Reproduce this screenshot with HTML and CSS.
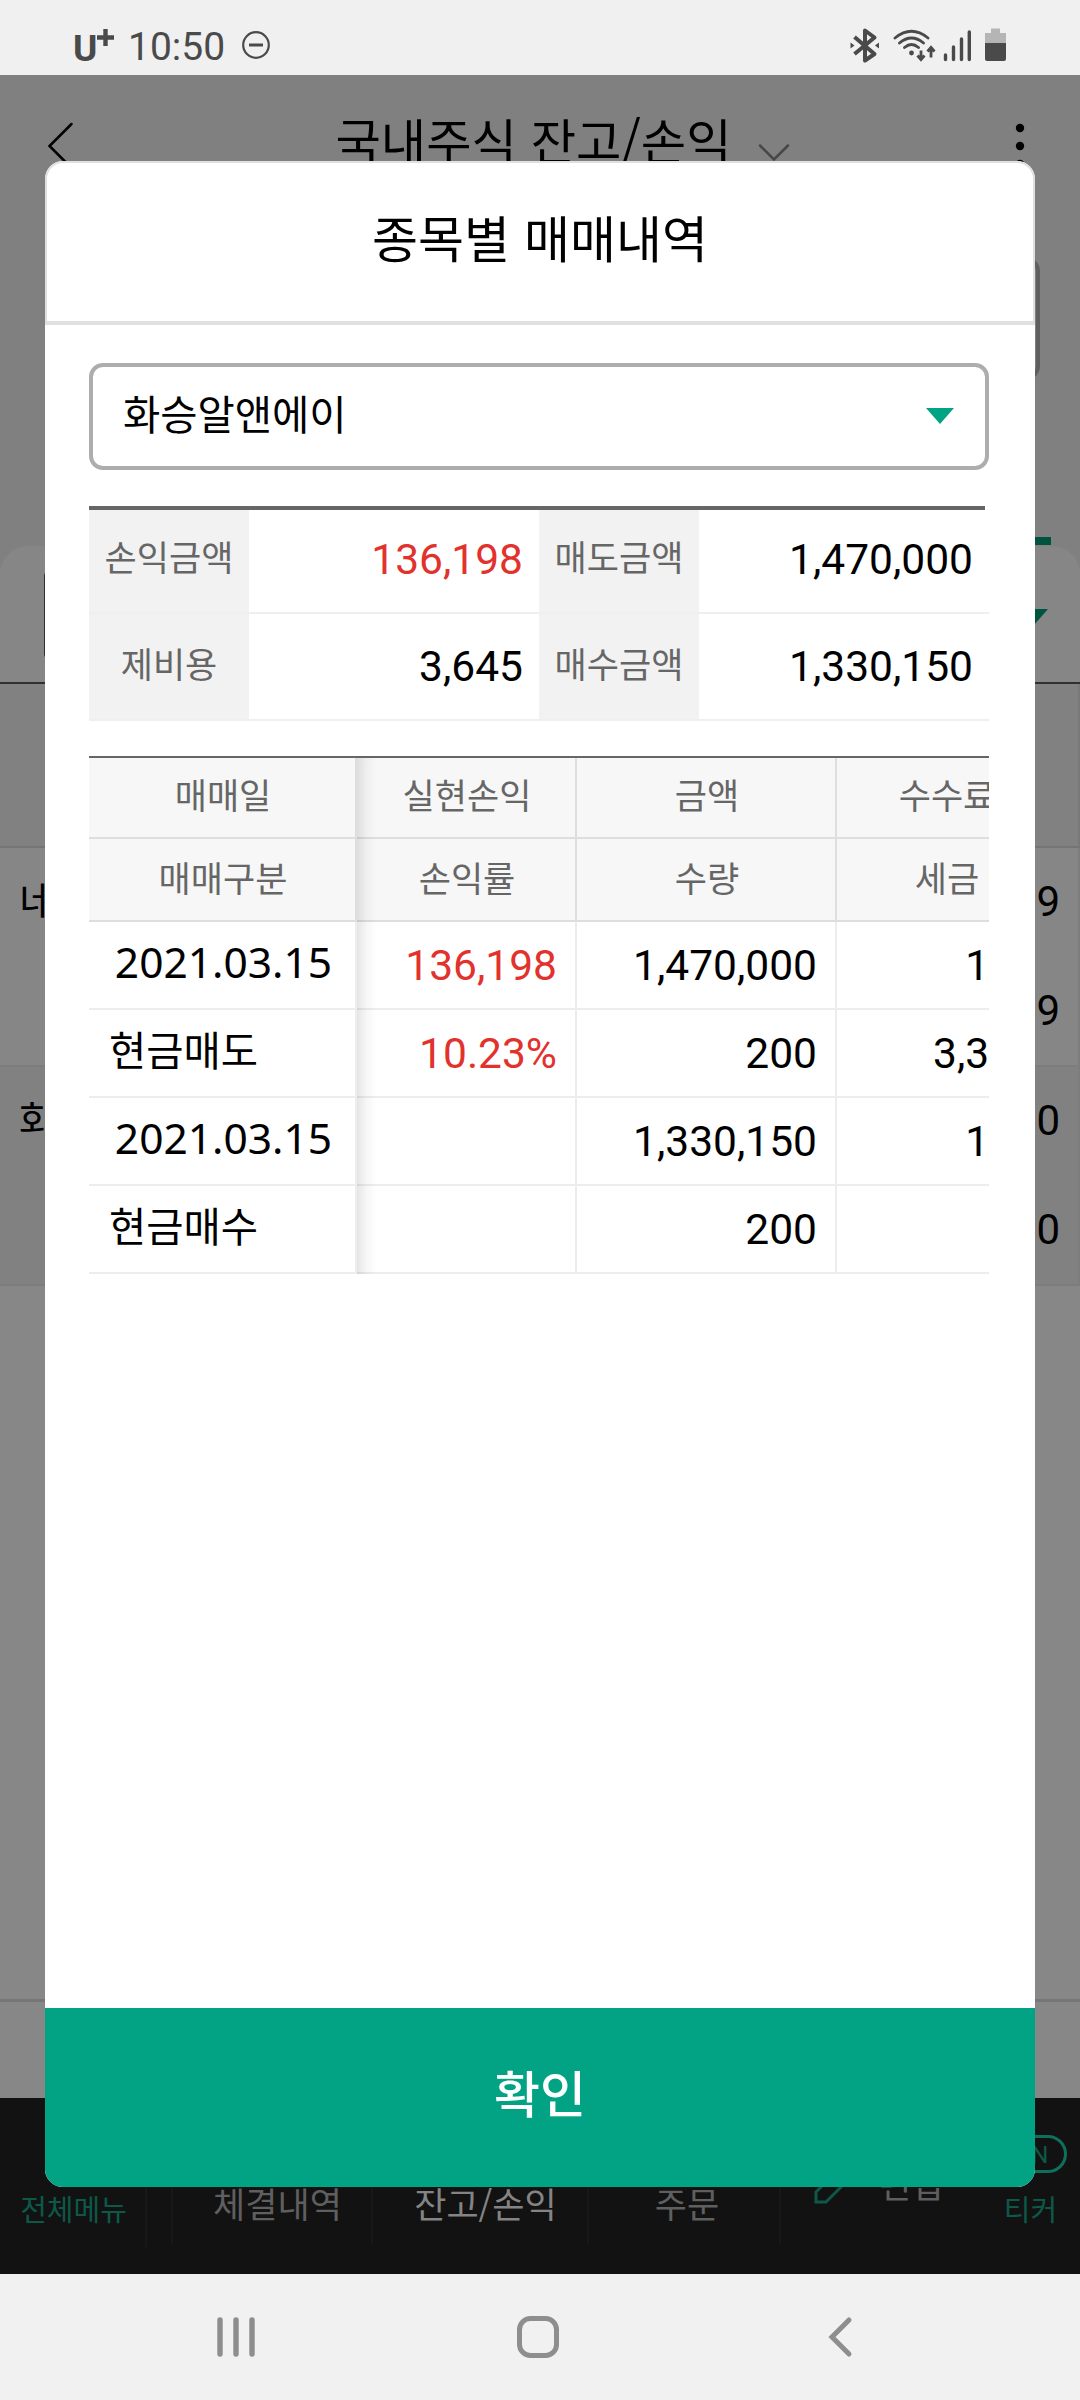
FILE: index.html
```html
<!DOCTYPE html>
<html lang="ko">
<head>
    <meta charset="UTF-8">
    <meta name="viewport" content="width=device-width, initial-scale=1.0">
    <title>종목별 매매내역</title>
    <link rel="stylesheet" href="styles.css">
</head>
<body>

    <!-- 상태바 -->
    <div class="status">
        <span class="carrier">U<svg width="17" height="17" viewBox="0 0 17 17"><path d="M8.500 0V17M0 8.500H17" stroke="#4a4a4a" stroke-width="4.400"/></svg></span>
        <span class="clock">10:50</span>
        <svg class="dnd" width="28" height="28" viewBox="0 0 28 28" fill="none" stroke="#4a4a4a">
            <circle cx="14" cy="14" r="12.800" stroke-width="2.200"/>
            <path d="M7 14H21" stroke-width="3"/>
        </svg>
        <svg class="status_icons" width="158" height="36" viewBox="0 0 158 36" fill="none" stroke="#4a4a4a">
            <!-- 블루투스 -->
            <path d="M4.500 9L24.500 26L15 32.500V2.500L24.500 9.500L4.500 26" stroke-width="4" stroke-linejoin="round"/>
            <path d="M0.500 14.500V20.500L4.500 17.500ZM29 14.500V20.500L25 17.500Z" fill="#4a4a4a" stroke="none"/>
            <!-- 와이파이 -->
            <path d="M45 10Q61.500 -3.500 78 10M49.500 15Q61.500 5 73.500 15M54.500 19.500Q61.500 13.500 68.500 19.500" stroke-width="2.800" stroke-linecap="round"/>
            <circle cx="61.500" cy="25" r="2.400" fill="#4a4a4a" stroke="none"/>
            <path d="M71 22.500V30M67.500 27.500L71 31.500L74.500 27.500M81 29.500V21M77.500 23.500L81 19.500L84.500 23.500" stroke-width="2.800"/>
            <!-- 안테나 -->
            <path d="M95.500 27V31.500M103.500 19V31.500M111.500 11V31.500M119.300 4V31.500" stroke-width="3.400" stroke-linecap="round"/>
            <!-- 배터리 -->
            <path d="M141 0.500H150V5H156V15H135V5H141Z" fill="#b5b5b5" stroke="none"/>
            <path d="M135 15H156V31Q156 33 154 33H137Q135 33 135 31Z" fill="#4a4a4a" stroke="none"/>
        </svg>
    </div>

    <div class="app">
        <!-- 뒤에 깔린 잔고 화면 -->
        <div class="app_header">
            <svg width="30" height="52" viewBox="0 0 30 52" fill="none" stroke="#000" stroke-width="2.500" stroke-linecap="round"><path d="M25.500 4L3.500 26L25.500 48"/></svg>
            <div class="app_title">
                국내주식 잔고/손익
                <svg width="34" height="20" viewBox="0 0 34 20" fill="none" stroke="#474747" stroke-width="2.500" stroke-linecap="round"><path d="M3 2.500L17 16.500L31 2.500"/></svg>
            </div>
            <svg width="12" height="48" viewBox="0 0 12 48"><circle cx="6" cy="6" r="4.200"/><circle cx="6" cy="24" r="4.200"/><circle cx="6" cy="42" r="4.200"/></svg>
        </div>
        <div class="account_box"></div>
        <div class="tab_line"></div>
        <div class="filter">
            <div class="filter_box"><span class="caret"></span></div>
        </div>
        <div class="list_head"></div>
        <div class="stock">
            <span class="stock_name">네</span>
            <span class="stock_num">9</span>
            <span class="stock_num">9</span>
        </div>
        <div class="stock stock_dark">
            <span class="stock_name">화승</span>
            <span class="stock_num">0</span>
            <span class="stock_num">0</span>
        </div>
        <div class="list_empty"></div>
        <div class="list_foot"></div>

        <div class="tabbar">
            <div class="tab tab_menu">
                <svg width="44" height="34" viewBox="0 0 44 34" stroke="#0b7762" stroke-width="4" stroke-linecap="round"><path d="M3 3H41M3 18H41M3 32H41"/></svg>
                <span>전체메뉴</span>
            </div>
            <div class="tab tab_gap"></div>
            <div class="tab tab_a">체결내역</div>
            <div class="tab tab_b">잔고/손익</div>
            <div class="tab tab_c">주문</div>
            <div class="tab_edit">
                <svg width="44" height="44" viewBox="0 0 44 44" fill="none" stroke="#0d5848" stroke-width="3"><path d="M2 42V32L32 2L42 12L12 42Z"/></svg>
                편집
            </div>
            <div class="tab_ticker">
                <span class="on">ON</span>
                <span>티커</span>
            </div>
        </div>

        <!-- 팝업 -->
        <div class="popup">
            <div class="popup_header">종목별 매매내역</div>
            <div class="popup_body">
                <div class="select">화승알앤에이<span class="caret caret_on"></span></div>

                <div class="summary_line"></div>
                <div class="summary">
                    <div class="label">손익금액</div><div class="value red">136,198</div>
                    <div class="label">매도금액</div><div class="value">1,470,000</div>
                    <div class="label">제비용</div><div class="value">3,645</div>
                    <div class="label">매수금액</div><div class="value">1,330,150</div>
                </div>

                <div class="trade">
                    <table class="trade_table">
                        <tr class="head1"><th class="c1">매매일</th><th class="c2">실현손익</th><th class="c3">금액</th><th class="c4">수수료</th></tr>
                        <tr class="head2"><th>매매구분</th><th>손익률</th><th>수량</th><th>세금</th></tr>
                        <tr><td class="date">2021.03.15</td><td class="red">136,198</td><td>1,470,000</td><td>139</td></tr>
                        <tr><td class="kind">현금매도</td><td class="red">10.23%</td><td>200</td><td>3,381</td></tr>
                        <tr><td class="date">2021.03.15</td><td></td><td>1,330,150</td><td>125</td></tr>
                        <tr><td class="kind">현금매수</td><td></td><td>200</td><td></td></tr>
                    </table>
                    <div class="trade_shadow"></div>
                </div>
            </div>
            <button class="ok">확인</button>
        </div>
    </div>

    <!-- 내비게이션 바 -->
    <div class="navbar">
        <svg width="40" height="44" viewBox="0 0 40 44" stroke="#8e8e8e" stroke-width="5.400" stroke-linecap="round"><path d="M4 5V39M20 5V39M36 5V39"/></svg>
        <svg width="44" height="44" viewBox="0 0 44 44" fill="none" stroke="#8e8e8e" stroke-width="5"><rect x="3.500" y="3.500" width="37" height="37" rx="11"/></svg>
        <svg width="30" height="44" viewBox="0 0 30 44" fill="none" stroke="#8e8e8e" stroke-width="5" stroke-linecap="round"><path d="M24 5L7 22L24 39"/></svg>
    </div>

</body>
</html>
```
FILE: styles.css
```css
* {
    box-sizing: border-box;
    margin: 0;
    padding: 0;
}

body {
    width: 1080px;
    height: 2400px;
    overflow: hidden;
    font-family: "Noto Sans CJK KR", sans-serif;
    color: #000;
}

svg {
    display: block;
}

/* 상태바 */
.status {
    display: flex;
    align-items: center;
    height: 75px;
    padding-left: 73px;
    background-color: #f0f0f0;
    color: #4a4a4a;
}

.carrier {
    display: flex;
    width: 55px;
    height: 37px;
    padding-top: 8px;
    font-family: Roboto, sans-serif;
    font-size: 37px;
    font-weight: 700;
    line-height: 44px;
}

.carrier svg {
    margin-top: 2px;
}

.clock {
    width: 114px;
    padding-top: 18px;
    height: 75px;
    font-family: Roboto, sans-serif;
    font-size: 39px;
    line-height: 58px;
}

.dnd {
    margin-top: 15px;
}

.status_icons {
    margin: 17px 0 0 580px;
}

/* 잔고 화면 */
.app {
    position: relative;
    height: 2199px;
    background-color: #808080;
}

.app_header {
    display: flex;
    justify-content: space-between;
    height: 182px;
    padding: 45px 54px 0 46px;
}

.app_title {
    display: flex;
    gap: 25px;
    margin: -16px 0 0 36px;
    font-size: 49.300px;
    line-height: 70px;
    height: 70px;
}

.app_title svg {
    margin-top: 39px;
}

.app_header > svg:last-child {
    margin-top: 2px;
}

.account_box {
    height: 123px;
    margin: 0 40px 0 60px;
    border: 4px solid #5f5f5f;
    border-radius: 14px;
}

.tab_line {
    width: 240px;
    height: 8px;
    margin: 157px 0 1px 811px;
    background-color: #00533f;
}

.filter {
    height: 138px;
    padding-top: 26px;
    border-radius: 28px 28px 0 0;
    border-bottom: 2px solid #303030;
    background-color: #868686;
}

.filter_box {
    display: flex;
    justify-content: flex-end;
    height: 86px;
    margin: 0 32px 0 44px;
    padding-top: 37px;
    border-left: 2px solid #303030;
    border-radius: 4px;
}

.caret {
    width: 28px;
    height: 16px;
    background-color: #00533f;
    clip-path: polygon(0 0, 100% 0, 50% 100%);
}

.list_head {
    height: 164px;
    border-right: 2px solid #797979;
    border-bottom: 2px solid #757575;
    background-color: #818181;
}

.stock {
    display: grid;
    grid-template-columns: 1fr 1fr;
    grid-template-rows: 109px 109px;
    height: 219px;
    padding: 0 18px 0 19px;
    border-right: 2px solid #7d7d7d;
    border-bottom: 2px solid #7d7d7d;
    background-color: #868686;
    line-height: 107px;
}

.stock_dark {
    background-color: #818181;
}

.stock_name {
    font-size: 40px;
    line-height: 102px;
}

.stock_num {
    grid-column: 2;
    font-family: Roboto, sans-serif;
    font-size: 42px;
    text-align: right;
}

.list_empty {
    height: 716px;
    border-bottom: 3px solid #767676;
    background-color: #878787;
}

.list_foot {
    height: 96px;
    background-color: #878787;
}

.tabbar {
    display: flex;
    height: 176px;
    background-color: #121212;
    color: #5f5f5f;
    font-size: 35px;
    line-height: 52px;
}

.tab {
    flex-shrink: 0;
    height: 146px;
    padding-top: 79px;
    border-right: 2px solid #181818;
    text-align: center;
}

.tab_menu {
    display: flex;
    flex-direction: column;
    align-items: center;
    width: 147px;
    height: 149px;
    padding-top: 42px;
    color: #0d5848;
    font-size: 29px;
    line-height: 42px;
}

.tab_menu span {
    margin: 13px 0 0 2px;
}

.tab_menu svg {
    margin-right: -20px;
}

.tab_gap {
    width: 26px;
}

.tab_a {
    width: 200px;
    padding-left: 11px;
}

.tab_b {
    width: 216px;
    padding-left: 11px;
    color: #848484;
}

.tab_c {
    width: 192px;
    padding-left: 6px;
}

.tab_edit {
    display: flex;
    width: 196px;
    gap: 21px;
    padding: 59px 0 0 33px;
}

.tab_edit svg {
    flex-shrink: 0;
    margin-top: 3px;
}

.tab_ticker {
    display: flex;
    flex-direction: column;
    align-items: center;
    width: 99px;
    padding-top: 37px;
    margin-left: 4px;
    color: #0d5848;
    font-size: 29px;
    line-height: 42px;
}

.on {
    width: 72px;
    height: 38px;
    margin-bottom: 14px;
    padding-right: 15px;
    border: 3px solid #0f6f5d;
    border-radius: 19px;
    font-family: Roboto, sans-serif;
    font-size: 24px;
    line-height: 34px;
    text-align: right;
}

/* 팝업 */
.popup {
    position: absolute;
    top: 86px;
    left: 45px;
    display: flex;
    flex-direction: column;
    width: 990px;
    height: 2026px;
    border-radius: 18px;
    background-color: #fff;
    overflow: hidden;
}

.popup_header {
    height: 164px;
    border: 2px solid #e0e0e0;
    border-bottom-width: 4px;
    border-radius: 18px 18px 0 0;
    font-size: 50px;
    line-height: 147px;
    text-align: center;
}

.popup_body {
    flex: 1;
    padding: 38px 46px 0 44px;
}

.select {
    display: flex;
    justify-content: space-between;
    height: 107px;
    padding: 0 31px 0 30px;
    border: 4px solid #adadad;
    border-radius: 14px;
    font-size: 40.500px;
    line-height: 92px;
}

.caret_on {
    margin-top: 41px;
    background-color: #00a383;
}

.summary_line {
    width: 896px;
    height: 4px;
    margin-top: 36px;
    background-color: #666;
}

.summary {
    display: grid;
    grid-template-columns: 160px 290px 160px 290px;
    grid-template-rows: 104px 107px;
}

.label {
    border-bottom: 2px solid #efefef;
    background-color: #f2f2f2;
    color: #666;
    font-size: 35px;
    line-height: 92px;
    text-align: center;
}

.value {
    padding-right: 16px;
    border-bottom: 2px solid #efefef;
    font-family: Roboto, sans-serif;
    font-size: 42.500px;
    line-height: 99px;
    text-align: right;
}

.label:nth-child(n+5),
.value:nth-child(n+5) {
    padding-top: 3px;
}

.red {
    color: #e2322d;
}

.trade {
    position: relative;
    margin-top: 35px;
    border-top: 2px solid #666;
    overflow: hidden;
}

.trade_table {
    width: 968px;
    border-spacing: 0;
    table-layout: fixed;
}

.c1 { width: 268px; }
.c2 { width: 220px; }
.c3 { width: 260px; }
.c4 { width: 220px; }

.trade_table th {
    height: 83px;
    padding: 0 0 6px 2px;
    border-right: 2px solid #dedede;
    border-bottom: 2px solid #dedede;
    background-color: #f7f7f7;
    color: #666;
    font-size: 35px;
    font-weight: 400;
    line-height: 1;
}

.trade_table .head1 th {
    height: 81px;
    padding-bottom: 8px;
}

.trade_table td {
    height: 88px;
    padding: 2px 18px 0 0;
    border-right: 2px solid #ededed;
    border-bottom: 2px solid #ededed;
    font-family: Roboto, sans-serif;
    font-size: 42.500px;
    line-height: 1;
    text-align: right;
}

.trade_table .date {
    padding: 0 0 6px 3px;
    font-family: "Noto Sans", sans-serif;
    font-size: 42.500px;
    text-align: center;
}

.trade_table .kind {
    padding: 0 0 7px 20px;
    font-family: "Noto Sans CJK KR", sans-serif;
    font-size: 40.500px;
    text-align: left;
}

/* 고정 열 오른쪽 그림자 */
.trade_shadow {
    position: absolute;
    top: 0;
    left: 268px;
    width: 20px;
    height: 100%;
    background: linear-gradient(to right, rgba(0, 0, 0, 0.1), rgba(0, 0, 0, 0.03) 50%, rgba(0, 0, 0, 0));
}

.ok {
    height: 179px;
    padding-bottom: 13px;
    border: 0;
    background-color: #01a384;
    color: #fff;
    font-family: "Noto Sans CJK KR", sans-serif;
    font-size: 50px;
    font-weight: 500;
}

/* 내비게이션 바 */
.navbar {
    display: flex;
    height: 126px;
    padding: 41px 0 0 216px;
    background-color: #f1f1f1;
}

.navbar svg + svg {
    margin-left: 260px;
}

.navbar svg:last-child {
    margin-left: 265px;
}
```
